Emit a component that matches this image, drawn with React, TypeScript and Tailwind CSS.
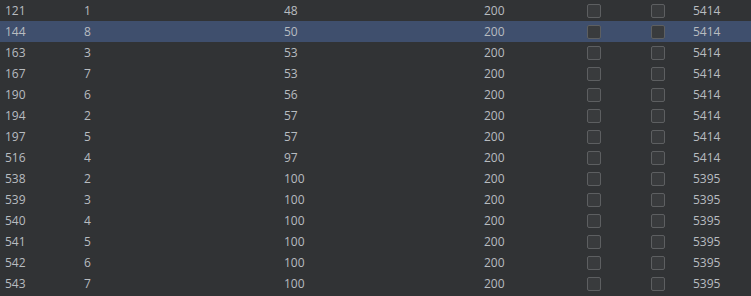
const rows: [string, string, string, string, string][] = [
  ["121", "1", "48", "200", "5414"],
  ["144", "8", "50", "200", "5414"],
  ["163", "3", "53", "200", "5414"],
  ["167", "7", "53", "200", "5414"],
  ["190", "6", "56", "200", "5414"],
  ["194", "2", "57", "200", "5414"],
  ["197", "5", "57", "200", "5414"],
  ["516", "4", "97", "200", "5414"],
  ["538", "2", "100", "200", "5395"],
  ["539", "3", "100", "200", "5395"],
  ["540", "4", "100", "200", "5395"],
  ["541", "5", "100", "200", "5395"],
  ["542", "6", "100", "200", "5395"],
  ["543", "7", "100", "200", "5395"],
];

function Box() {
  return (
    <span className="block h-[14px] w-[14px] rounded-[2px] border border-[#5d5f61] bg-[#393b3d]" />
  );
}

export default function App() {
  return (
    <div className="h-[296px] w-[751px] overflow-hidden bg-[#313335] font-['Open_Sans',sans-serif] text-[12px] text-[#b8bcc0]">
      {rows.map((r, i) => (
        <div
          key={i}
          className={`grid h-[21px] grid-cols-[79px_200px_200px_103px_64px_42px_1fr] items-center pl-[5px] ${
            i === 1 ? "bg-[#3f4f6d]" : ""
          }`}
        >
          <span>{r[0]}</span>
          <span>{r[1]}</span>
          <span>{r[2]}</span>
          <span>{r[3]}</span>
          <Box />
          <Box />
          <span>{r[4]}</span>
        </div>
      ))}
    </div>
  );
}
